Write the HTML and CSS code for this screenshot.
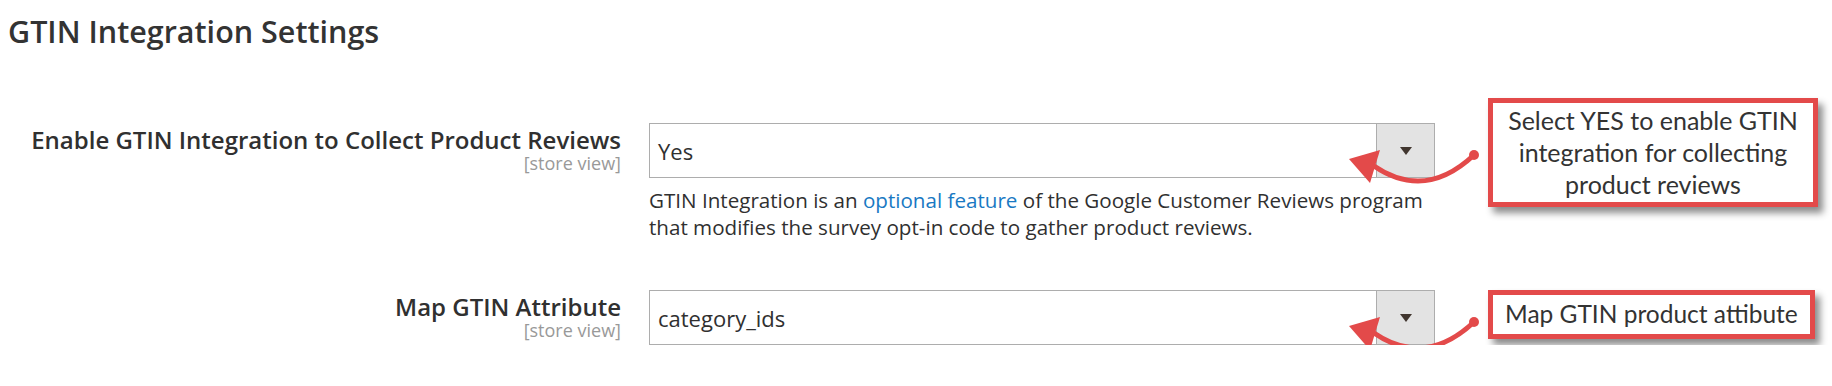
FILE: index.html
```html
<!DOCTYPE html>
<html lang="en">
<head>
    <meta charset="UTF-8">
    <meta name="viewport" content="width=device-width, initial-scale=1.0">
    <title>GTIN Integration Settings</title>
    <link rel="stylesheet" href="styles.css">
</head>
<body>
    <div class="page">
        <h1 class="section-title">GTIN Integration Settings</h1>

        <div class="field-row first">
            <div class="field-label">
                <span class="label-text">Enable GTIN Integration to Collect Product Reviews</span>
                <span class="scope">[store view]</span>
            </div>
            <div class="field-control">
                <div class="select-box">
                    <span class="select-value">Yes</span>
                    <span class="select-btn"><i class="caret"></i></span>
                </div>
                <p class="note">GTIN Integration is an <a href="#">optional feature</a> of the Google Customer Reviews program that modifies the survey opt-in code to gather product reviews.</p>
            </div>
            <div class="annotation">
                <svg class="pointer" viewBox="0 0 140 45" width="140" height="45">
                    <path d="M133,12 C117,27 97,38 77,38 C60,38 46,32 33,23" fill="none" stroke="#e34a4a" stroke-width="5" stroke-linecap="round"/>
                    <polygon points="8,16 39,7 29,40" fill="#e34a4a"/>
                    <circle cx="133" cy="12" r="5" fill="#e34a4a"/>
                </svg>
                <div class="callout tall">Select YES to enable GTIN integration for collecting product reviews</div>
            </div>
        </div>

        <div class="field-row">
            <div class="field-label">
                <span class="label-text">Map GTIN Attribute</span>
                <span class="scope">[store view]</span>
            </div>
            <div class="field-control">
                <div class="select-box">
                    <span class="select-value">category_ids</span>
                    <span class="select-btn"><i class="caret"></i></span>
                </div>
            </div>
            <div class="annotation">
                <svg class="pointer" viewBox="0 0 140 45" width="140" height="45">
                    <path d="M133,12 C117,27 97,38 77,38 C60,38 46,32 33,23" fill="none" stroke="#e34a4a" stroke-width="5" stroke-linecap="round"/>
                    <polygon points="8,16 39,7 29,40" fill="#e34a4a"/>
                    <circle cx="133" cy="12" r="5" fill="#e34a4a"/>
                </svg>
                <div class="callout">Map GTIN product attibute</div>
            </div>
        </div>
    </div>
</body>
</html>
```

FILE: styles.css
```css
body {
    margin: 0;
    padding: 0;
    background: #fff;
    font-family: "Open Sans", "Liberation Sans", sans-serif;
    color: #303030;
}

.page {
    padding-top: 14px;
}

.section-title {
    margin: 0;
    padding-left: 8px;
    font-size: 30.5px;
    line-height: 34px;
    font-weight: 600;
    color: #333;
}

.field-row {
    display: flex;
    align-items: flex-start;
    margin-top: 49px;
}

.field-row.first {
    margin-top: 75px;
}

.field-label {
    width: 621px;
    flex-shrink: 0;
    text-align: right;
    padding-top: 3px;
}

.label-text {
    display: block;
    font-size: 24px;
    line-height: 28px;
    font-weight: 600;
    color: #303030;
}

.scope {
    display: block;
    font-size: 18px;
    line-height: 18px;
    color: #999;
}

.field-control {
    width: 786px;
    margin-left: 28px;
    flex-shrink: 0;
}

.select-box {
    display: flex;
    align-items: stretch;
    height: 55px;
    box-sizing: border-box;
    border: 1px solid #adadad;
    background: #fff;
}

.select-value {
    flex: 1;
    align-self: center;
    padding-left: 8px;
    font-size: 22px;
    line-height: 30px;
    color: #303030;
}

.select-btn {
    width: 57px;
    border-left: 1px solid #adadad;
    background: #e3e3e3;
    display: flex;
    align-items: center;
    justify-content: center;
}

.caret {
    width: 0;
    height: 0;
    border-left: 6px solid transparent;
    border-right: 6px solid transparent;
    border-top: 8px solid #41362f;
}

.note {
    margin: 9px 0 0;
    font-size: 20.6px;
    line-height: 27px;
    color: #303030;
}

.note a {
    color: #1979c3;
    text-decoration: none;
}

.annotation {
    position: relative;
    margin-left: 53px;
}

.pointer {
    position: absolute;
    left: -147px;
    top: 20px;
    overflow: visible;
}

.callout {
    display: inline-block;
    box-sizing: border-box;
    border: 5px solid #e34a4a;
    background: #fff;
    padding: 3px 12px 4px;
    font-family: Lato, "Liberation Sans", sans-serif;
    font-size: 24.5px;
    line-height: 32px;
    color: #333;
    white-space: nowrap;
    box-shadow: 5px 6px 7px rgba(0, 0, 0, 0.45);
}

.callout.tall {
    width: 330px;
    margin-top: -25px;
    padding: 1px 8px 2px;
    font-size: 25px;
    text-align: center;
    white-space: normal;
}
```
